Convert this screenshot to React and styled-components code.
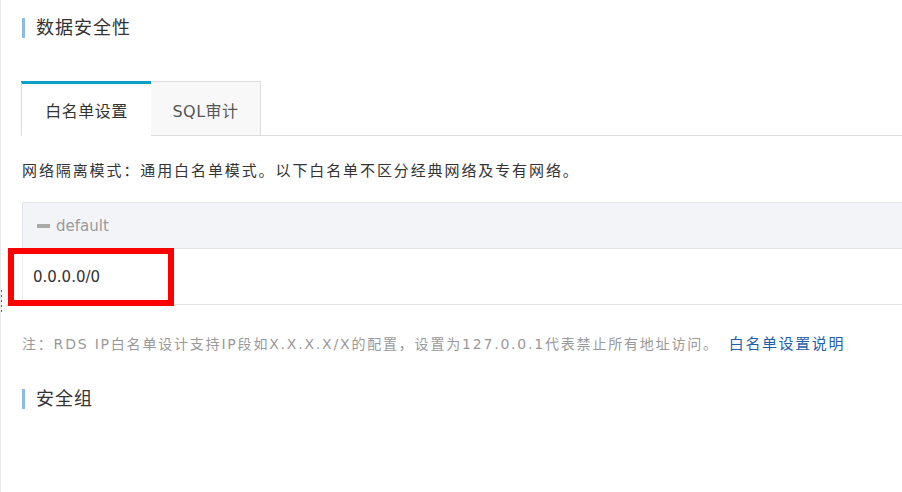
import React from "react";
import styled, { createGlobalStyle } from "styled-components";

const GlobalStyle = createGlobalStyle`
  html, body {
    margin: 0;
    padding: 0;
    background: #fff;
  }
  body {
    font-family: "DejaVu Sans", "Noto Sans CJK SC", sans-serif;
    color: #333;
  }
`;

const Panel = styled.div`
  position: relative;
  min-height: 100vh;
  box-sizing: border-box;
  border-left: 1px solid #e9e9e9;
  padding: 18px 0 40px 21px;
  overflow: hidden;
`;

const Handle = styled.div`
  position: absolute;
  left: -1px;
  top: 290px;
  width: 2px;
  height: 24px;
  background: repeating-linear-gradient(
    to bottom,
    #666 0 2px,
    transparent 2px 5px
  );
`;

const SectionTitle = styled.h3`
  margin: ${(p) => p.$top || 0}px 0 0 0;
  height: 20px;
  line-height: 20px;
  border-left: 3px solid #8fbbe2;
  padding-left: 11px;
  font-size: 18px;
  font-weight: normal;
  letter-spacing: 1px;
  color: #333;
`;

const TabBar = styled.div`
  display: flex;
  margin: 43px 0 0 -1px;
  border-bottom: 1px solid #ddd;
`;

const Tab = styled.div`
  box-sizing: border-box;
  width: ${(p) => p.$width}px;
  height: 55px;
  margin-bottom: -1px;
  display: flex;
  align-items: center;
  justify-content: center;
  font-size: 16px;
  letter-spacing: 0.5px;
  border: 1px solid #ddd;
  border-left-width: ${(p) => (p.$active ? 1 : 0)}px;
  border-top: ${(p) => (p.$active ? "3px solid #0aa0c6" : "1px solid #ddd")};
  border-bottom-color: ${(p) => (p.$active ? "#fff" : "#ddd")};
  border-right-width: ${(p) => (p.$active ? 0 : 1)}px;
  background: ${(p) => (p.$active ? "#fff" : "#f8f8f8")};
  color: ${(p) => (p.$active ? "#333" : "#555")};
  padding-top: ${(p) => (p.$active ? 0 : 2)}px;
`;

const Desc = styled.p`
  margin: 25px 0 0 0;
  line-height: 20px;
  font-size: 15px;
  letter-spacing: 1.9px;
  color: #333;
`;

const Table = styled.div`
  margin-top: 21px;
  width: calc(100% + 20px);
`;

const GroupHead = styled.div`
  box-sizing: border-box;
  height: 47px;
  display: flex;
  align-items: center;
  gap: 6px;
  padding-left: 14px;
  background: #f3f4f8;
  border: 1px solid #e3e5ea;
  border-right: none;
  font-size: 15px;
  color: #9a9a9a;
`;

const Minus = styled.span`
  width: 13px;
  height: 4px;
  background: #aaa;
`;

const Row = styled.div`
  position: relative;
  box-sizing: border-box;
  height: 56px;
  display: flex;
  align-items: center;
  padding-left: 10px;
  border-left: 1px solid #eee;
  border-bottom: 1px solid #e5e5e5;
  font-size: 15px;
  color: #333;
`;

const RedMark = styled.div`
  position: absolute;
  left: -15px;
  top: -1px;
  width: 166px;
  height: 58px;
  box-sizing: border-box;
  border: 6px solid #ff0000;
`;

const Note = styled.p`
  margin: 29px 0 0 0;
  line-height: 20px;
  font-size: 14px;
  letter-spacing: 1.8px;
  color: #999;
  white-space: nowrap;
`;

const Link = styled.a`
  margin-left: 10px;
  font-size: 15px;
  letter-spacing: 1.6px;
  color: #1f5ea8;
  text-decoration: none;
`;

export default function App() {
  return (
    <>
      <GlobalStyle />
      <Panel>
        <Handle />
        <SectionTitle>数据安全性</SectionTitle>
        <TabBar>
          <Tab $active $width={130}>白名单设置</Tab>
          <Tab $width={110}>SQL审计</Tab>
        </TabBar>
        <Desc>网络隔离模式：通用白名单模式。以下白名单不区分经典网络及专有网络。</Desc>
        <Table>
          <GroupHead>
            <Minus />
            default
          </GroupHead>
          <Row>
            0.0.0.0/0
            <RedMark />
          </Row>
        </Table>
        <Note>
          注：RDS IP白名单设计支持IP段如X.X.X.X/X的配置，设置为127.0.0.1代表禁止所有地址访问。
          <Link href="#">白名单设置说明</Link>
        </Note>
        <SectionTitle $top={35}>安全组</SectionTitle>
      </Panel>
    </>
  );
}
